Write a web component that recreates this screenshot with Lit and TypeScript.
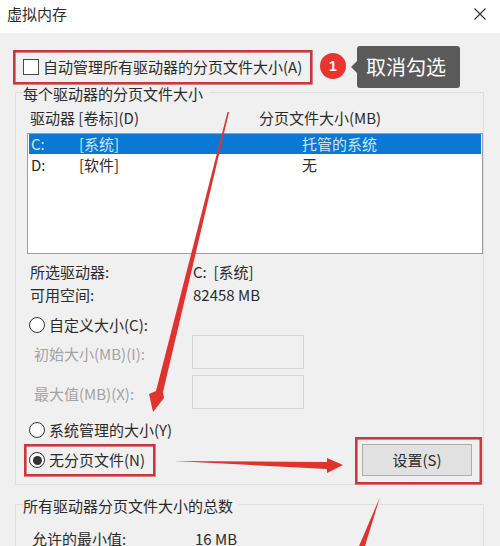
import { LitElement, html, css, svg } from "lit";
import { customElement } from "lit/decorators.js";

@customElement("app-root")
export class AppRoot extends LitElement {
  static styles = css`
    :host {
      display: block;
      position: relative;
      width: 500px;
      height: 546px;
      overflow: hidden;
      background: #f0f0f0;
      color: #2b2b2b;
      font: 15px/20px "Noto Sans CJK SC", "Noto Sans", sans-serif;
    }
    .titlebar {
      height: 33px;
      background: #fff;
      display: flex;
      align-items: center;
      justify-content: space-between;
      padding: 0 14px 5px 7px;
      box-sizing: border-box;
    }
    .titlebar svg { display: block; }
    .body { padding: 17px 16px 0 15px; }
    .auto { height: 34px; display: flex; align-items: center; gap: 4px; padding-left: 8px; }
    .check { width: 14px; height: 14px; border: 1px solid #4a4a4a; background: #fff; }
    .group { border: 1px solid #dfdfdf; margin-top: 8px; padding-bottom: 8px; }
    .group2 { margin-top: 19px; }
    .legend { width: fit-content; margin: -8px 0 0 7px; line-height: 18px; background: #f0f0f0; padding-right: 6px; }
    .head { display: grid; grid-template-columns: 229px 1fr; margin: 5px 0 0 14px; }
    .list {
      height: 119px;
      margin: 5px 0 0 11px;
      padding: 0 1px;
      border: 1px solid #9a9fa6;
      background: #fff;
      display: flex;
      flex-direction: column;
      gap: 1px;
    }
    .row { display: grid; grid-template-columns: 48px 223px 1fr; height: 20px; padding-left: 2px; line-height: 20px; }
    .row.sel { background: #0a78d4; color: #cfe6f7; }
    .info { display: grid; grid-template-columns: 163px 1fr; margin: 3px 0 0 14px; }
    .info.first { margin-top: 8px; }
    .info.total { margin: 17px 0 0 16px; line-height: 14px; }
    .radio { display: flex; align-items: center; gap: 4px; margin-left: 13px; }
    .radio.custom { margin-top: 10px; }
    .radio.system { margin-top: 11px; }
    .dot {
      width: 14px;
      height: 14px;
      border: 1px solid #333;
      border-radius: 50%;
      background: #fff;
      display: flex;
      align-items: center;
      justify-content: center;
    }
    .dot.on::after { content: ""; width: 9px; height: 9px; border-radius: 50%; background: #333; }
    .field { display: grid; grid-template-columns: 158px 112px; align-items: center; margin-left: 18px; color: #a3a3a3; }
    .field.second { margin-top: 6px; }
    .field span { padding-top: 4px; }
    .input { height: 32px; border: 1px solid #d4d4d4; }
    .bottom { display: flex; align-items: center; justify-content: space-between; margin-top: 4px; padding-right: 11px; }
    .btn {
      width: 108px;
      height: 30px;
      border: 1px solid #adadad;
      background: #e1e1e1;
      display: flex;
      align-items: center;
      justify-content: center;
    }
    .tip {
      position: absolute;
      left: 357px;
      top: 46px;
      width: 98px;
      height: 42px;
      padding-right: 5px;
      border-radius: 3px;
      background: #5a5a5a;
      color: #fff;
      font-size: 20px;
      line-height: 42px;
      text-align: center;
    }
    .tip::before {
      content: "";
      position: absolute;
      left: -6px;
      top: 15px;
      border: 6px solid transparent;
      border-left: 0;
      border-right-color: #5a5a5a;
    }
    .marks { position: absolute; left: 0; top: 0; }
    .badge { font: bold 14px "Liberation Sans", sans-serif; fill: #fff; text-anchor: middle; }
  `;

  private marks() {
    return svg`
      <g fill="none" stroke="#c9383c" stroke-width="2.6">
        <rect x="14.3" y="51.3" width="297" height="32" />
        <rect x="25.3" y="445.3" width="129" height="30" />
        <rect x="356.3" y="438.3" width="124.5" height="45" />
      </g>
      <g fill="#e0332f">
        <polygon points="229,112 227.5,112 156,391 149,394 153,412 164,398 163,392" />
        <polygon points="174,461 327,462 327,458 343,465 327,473 327,469" />
        <polygon points="380,497 359,546 365,546" />
      </g>
      <circle cx="333" cy="66" r="13" fill="#e8352f" />
      <text class="badge" x="333" y="71">1</text>
    `;
  }

  render() {
    return html`
      <div class="titlebar">
        <span>虚拟内存</span>
        <svg width="12" height="12" viewBox="0 0 12 12" fill="none" stroke="#333" stroke-width="1.1">
          <path d="M0.5 0.5 11.5 11.5M11.5 0.5 0.5 11.5" />
        </svg>
      </div>
      <div class="body">
        <div class="auto"><div class="check"></div><span>自动管理所有驱动器的分页文件大小(A)</span></div>
        <div class="group">
          <div class="legend">每个驱动器的分页文件大小</div>
          <div class="head"><span>驱动器 [卷标](D)</span><span>分页文件大小(MB)</span></div>
          <div class="list">
            <div class="row sel"><span>C:</span><span>[系统]</span><span>托管的系统</span></div>
            <div class="row"><span>D:</span><span>[软件]</span><span>无</span></div>
          </div>
          <div class="info first"><span>所选驱动器:</span><span>C:&nbsp; [系统]</span></div>
          <div class="info"><span>可用空间:</span><span>82458 MB</span></div>
          <div class="radio custom"><div class="dot"></div><span>自定义大小(C):</span></div>
          <div class="field"><span>初始大小(MB)(I):</span><div class="input"></div></div>
          <div class="field second"><span>最大值(MB)(X):</span><div class="input"></div></div>
          <div class="radio system"><div class="dot"></div><span>系统管理的大小(Y)</span></div>
          <div class="bottom">
            <div class="radio"><div class="dot on"></div><span>无分页文件(N)</span></div>
            <div class="btn">设置(S)</div>
          </div>
        </div>
        <div class="group group2">
          <div class="legend">所有驱动器分页文件大小的总数</div>
          <div class="info total"><span>允许的最小值:</span><span>16 MB</span></div>
        </div>
      </div>
      <svg class="marks" width="500" height="546" viewBox="0 0 500 546">${this.marks()}</svg>
      <div class="tip">取消勾选</div>
    `;
  }
}
